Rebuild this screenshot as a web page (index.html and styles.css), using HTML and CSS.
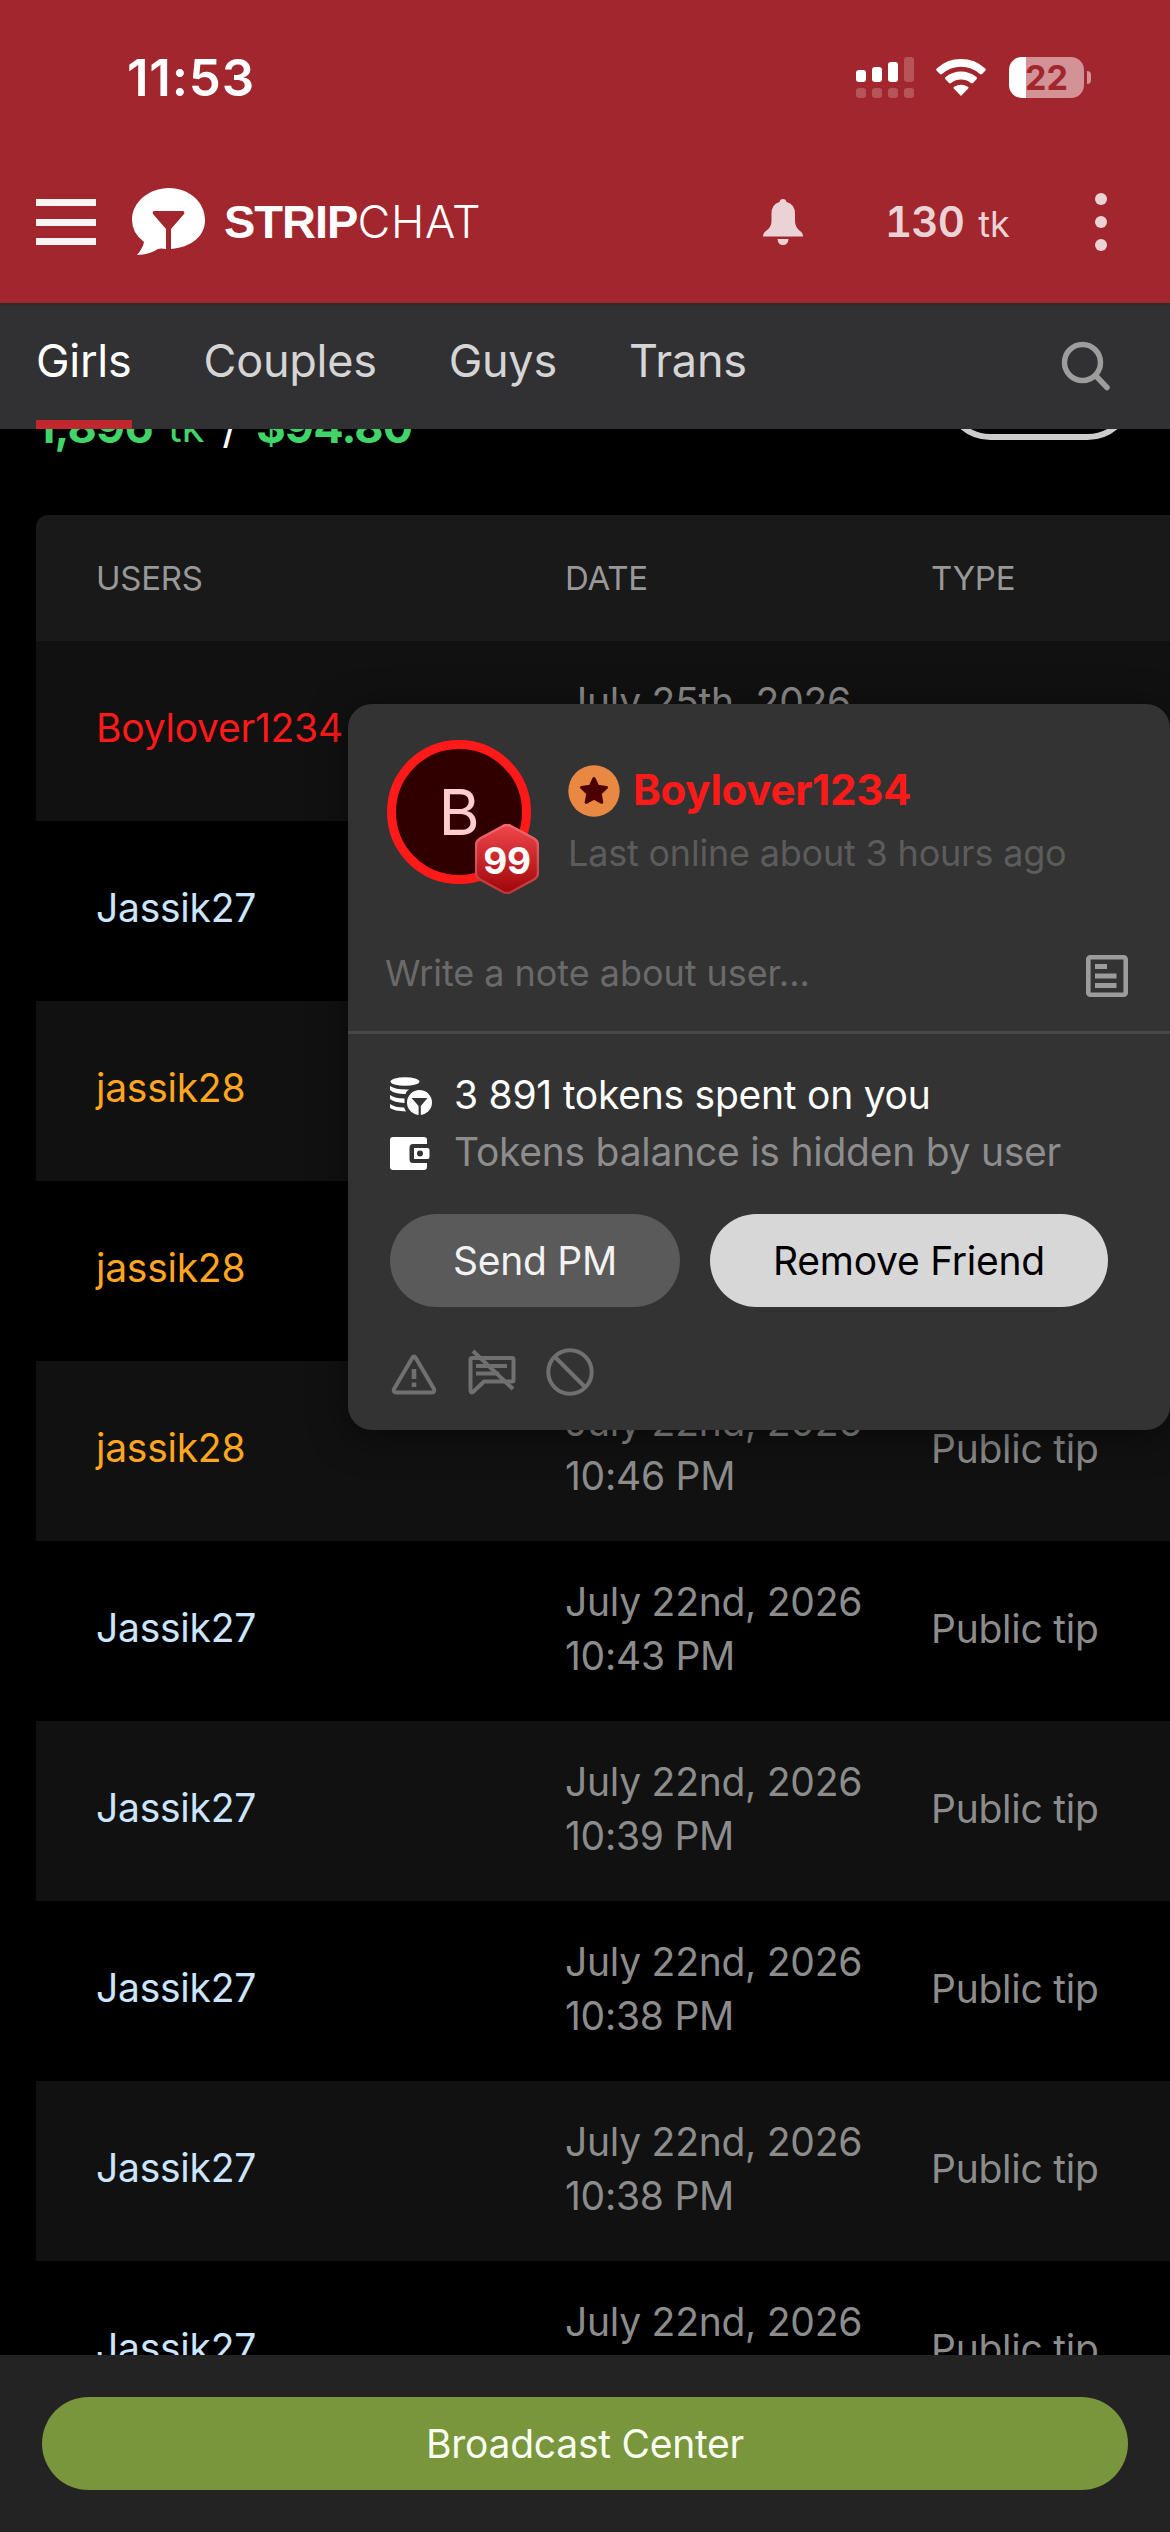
FILE: index.html
```html
<!DOCTYPE html>
<html lang="en">
<head>
<meta charset="utf-8">
<title>Stripchat</title>
<link rel="stylesheet" href="styles.css">
</head>
<body>
<div class="status-bar">
  <div class="time">11:53</div>
  <div class="status-icons">
    <svg class="signal" width="58" height="41" viewBox="0 0 58 41" fill="#fff">
      <rect x="0" y="13" width="10" height="12" rx="3"/><rect x="16" y="10" width="10" height="15" rx="3"/><rect x="32" y="5" width="10" height="20" rx="3"/>
      <g fill="#b55459"><rect x="48" y="0" width="10" height="25" rx="3"/><rect x="0" y="31" width="10" height="10" rx="3"/><rect x="16" y="31" width="10" height="10" rx="3"/><rect x="32" y="31" width="10" height="10" rx="3"/><rect x="48" y="31" width="10" height="10" rx="3"/></g>
    </svg>
    <svg class="wifi" width="50" height="37" viewBox="0 0 50 37" fill="#fff">
      <path d="M25 37 L17.8 29.6 Q17 28.6 18.2 27.8 Q25 23.6 31.800 27.800 Q33 28.600 32.200 29.600Z"/>
      <path d="M9.300 20 Q8.500 19 9.600 18 Q16.500 12.500 25 12.500 Q33.500 12.500 40.400 18 Q41.500 19 40.700 20 L37 24 Q36 24.800 35 24 Q30.500 20.600 25 20.600 Q19.500 20.600 15 24 Q14 24.800 13 24Z"/>
      <path d="M.5 11.400 Q-.3 10.400 .8 9.400 Q11 0 25 0 Q39 0 49.200 9.400 Q50.300 10.400 49.500 11.400 L46 15 Q45 15.800 44 15 Q35.500 7.800 25 7.800 Q14.500 7.800 6 15 Q5 15.800 4 15Z"/>
    </svg>
    <div class="battery"><span class="battery-level">22</span></div>
  </div>
</div>
<header class="header">
  <div class="burger"><i></i><i></i><i></i></div>
  <svg class="logo-mark" width="74" height="68" viewBox="0 0 74 68">
    <path fill="#fff" d="M37 0C57 0 73 14 73 32C73 48 60 59 39 61L39 41L52 26Q53 23.500 51 23L22 23Q20 23.500 21 26L34 41L34 61Q29 60 26 61Q18 66.500 5 67Q11 60 12 54Q0 45 0 32C0 14 17 0 37 0Z"/>
  </svg>
  <div class="logo-text"><b>STRIP</b><span>CHAT</span></div>
  <svg class="bell" width="40" height="46" viewBox="0 0 40 46" fill="#ebd3d5">
    <path d="M20 0Q23 0 23.500 3Q32 5 32 15V22Q32 28 37 32Q40 34 40 37.500H0Q0 34 3 32Q8.500 28 8.500 22V15Q8.500 5 16.500 3Q17 0 20 0Z"/><path d="M14.500 40H25.500Q25 46 20 46Q15 46 14.500 40Z"/>
  </svg>
  <div class="balance"><b>130</b><span>tk</span></div>
  <div class="more"><i></i><i></i><i></i></div>
</header>
<nav class="nav">
  <a class="tab tab-girls active">Girls</a><a class="tab tab-couples">Couples</a><a class="tab tab-guys">Guys</a><a class="tab tab-trans">Trans</a>
  <svg class="search" width="50" height="50" viewBox="0 0 50 50" fill="none" stroke="#9d9d9e" stroke-width="5.500" stroke-linecap="round"><circle cx="21.500" cy="21.500" r="18"/><path d="M35 35L46 46.500"/></svg>
</nav>
<main class="content">
  <div class="earnings">
    <div class="sum"><b>1,896</b><span class="unit">tk</span><span class="slash">/</span><b>$94.80</b></div>
    <div class="outline-btn"></div>
  </div>
  <div class="table">
    <div class="row head"><div>USERS</div><div>DATE</div><div>TYPE</div></div>
    <div class="row"><div class="user red">Boylover1234</div><div class="date">July 25th, 2026</div><div></div></div>
    <div class="row"><div class="user blue">Jassik27</div><div></div><div></div></div>
    <div class="row"><div class="user gold">jassik28</div><div></div><div></div></div>
    <div class="row"><div class="user gold">jassik28</div><div></div><div></div></div>
    <div class="row"><div class="user gold">jassik28</div><div class="date">July 22nd, 2026<br>10:46 PM</div><div class="type">Public tip</div></div>
    <div class="row"><div class="user blue">Jassik27</div><div class="date">July 22nd, 2026<br>10:43 PM</div><div class="type">Public tip</div></div>
    <div class="row"><div class="user blue">Jassik27</div><div class="date">July 22nd, 2026<br>10:39 PM</div><div class="type">Public tip</div></div>
    <div class="row"><div class="user blue">Jassik27</div><div class="date">July 22nd, 2026<br>10:38 PM</div><div class="type">Public tip</div></div>
    <div class="row"><div class="user blue">Jassik27</div><div class="date">July 22nd, 2026<br>10:38 PM</div><div class="type">Public tip</div></div>
    <div class="row"><div class="user blue">Jassik27</div><div class="date">July 22nd, 2026</div><div class="type">Public tip</div></div>
  </div>
</main>
<footer class="footer"><div class="broadcast">Broadcast Center</div></footer>

<section class="popup">
  <div class="profile">
    <div class="avatar">B
      <div class="level">
        <svg width="64" height="70" viewBox="0 0 64 70">
          <defs><linearGradient id="lv" x1="0" y1="0" x2="0" y2="1"><stop offset="0" stop-color="#f0474c"/><stop offset="1" stop-color="#a00509"/></linearGradient>
          <linearGradient id="le" x1="0" y1="0" x2="0" y2="1"><stop offset="0" stop-color="#f4686c"/><stop offset="1" stop-color="#b8383b"/></linearGradient></defs>
          <path d="M28 2Q32 0 36 2L59 14.500Q63 17 63 21V49Q63 53 59 55.500L36 68Q32 70 28 68L5 55.500Q1 53 1 49V21Q1 17 5 14.500Z" fill="url(#lv)" stroke="url(#le)" stroke-width="2.500"/>
        </svg>
        <span>99</span>
      </div>
    </div>
    <div class="identity">
      <div class="name-line">
        <svg width="52" height="52" viewBox="0 0 52 52"><circle cx="26" cy="26" r="25.700" fill="#e88843"/><path fill="#4d0000" stroke="#4d0000" stroke-width="3" stroke-linejoin="round" d="M26 13.500L29.800 21.300L38.500 22.500L32.200 28.500L33.800 37.300L26 33.200L18.200 37.300L19.800 28.500L13.500 22.500L22.200 21.300Z"/></svg>
        <b>Boylover1234</b>
      </div>
      <div class="last-seen">Last online about 3 hours ago</div>
    </div>
  </div>
  <div class="note">
    <span>Write a note about user...</span>
    <svg width="42" height="42" viewBox="0 0 42 42" fill="#9c9c9c"><rect x="2.300" y="2.300" width="37.400" height="37.400" rx="2" fill="none" stroke="#9c9c9c" stroke-width="4.600"/><rect x="9" y="9" width="12" height="5"/><rect x="9" y="18.500" width="21.500" height="5"/><rect x="9" y="28" width="21.500" height="5"/></svg>
  </div>
  <div class="tokens">
    <svg width="42" height="38" viewBox="0 0 42 38" fill="#fff"><ellipse cx="15" cy="4.500" rx="14.500" ry="4.300"/><path d="M0 9Q6 13 19 12.500Q16 14 15.500 17Q4 17 0 13Z"/><path d="M0 18Q5 21.500 14.500 21.500V26Q4 25.500 0 22Z"/><path d="M0 27Q5 30.500 14 30.500L16 34.500Q4 34 0 31Z"/><circle cx="29.500" cy="25.500" r="12.500"/><path fill="#333" d="M21.500 21H37.500L30.800 29V38H28.600V29Z"/></svg>
    <span>3 891 tokens spent on you</span>
  </div>
  <div class="tokens muted">
    <svg width="42" height="33" viewBox="0 0 42 33"><path fill="#fff" d="M3 0H34Q37 0 37 3V7H23Q19.500 7 19.500 10.500V22.500Q19.500 26 23 26H37V30Q37 33 34 33H3Q0 33 0 30V3Q0 0 3 0Z"/><path fill="#fff" fill-rule="evenodd" d="M24 11H37.500Q39.500 11 39.500 13V20Q39.500 22 37.500 22H24ZM30 13.500A3 3 0 1 0 30 19.500A3 3 0 1 0 30 13.500Z"/></svg>
    <span>Tokens balance is hidden by user</span>
  </div>
  <div class="actions"><div class="btn send">Send PM</div><div class="btn remove">Remove Friend</div></div>
  <div class="tools">
    <svg width="48" height="48" viewBox="0 0 48 48" fill="none" stroke="#707070" stroke-width="4" stroke-linejoin="round"><path d="M22.500 9.500Q24 7.500 25.500 9.500L44 41Q45 44.500 42 44.500H6Q3 44.500 4 41Z"/><path d="M24 21V31M24 34.500V39" stroke-width="4.600"/></svg>
    <svg width="48" height="48" viewBox="0 0 48 48" fill="none" stroke="#707070" stroke-width="4" stroke-linejoin="round"><path d="M4 10H44Q45.500 10 45.500 11.500V32Q45.500 33.500 44 33.500H16L5 44Q2.500 45.500 2.500 42V11.500Q2.500 10 4 10Z"/><path d="M8 18H39M8 25.500H31"/><path d="M5 3L45 41"/></svg>
    <svg width="48" height="48" viewBox="0 0 48 48" fill="none" stroke="#707070" stroke-width="4"><circle cx="24" cy="24" r="21.700"/><path d="M9 9L39 39"/></svg>
  </div>
</section>
</body>
</html>
```
FILE: styles.css
```css
* { box-sizing: border-box; }
body {
  margin: 0; width: 1170px; height: 2532px; overflow: hidden; position: relative;
  display: flex; flex-direction: column; background: #000; color: #fff;
  font-family: Inter, "Liberation Sans", sans-serif; font-size: 39px;
  font-optical-sizing: none; font-variation-settings: "opsz" 14;
  letter-spacing: -.25px; white-space: nowrap;
}
svg { display: block; flex: none; }

/* status bar */
.status-bar { height: 141px; background: #a1262d; display: flex; justify-content: space-between; padding: 57px 86px 0 127px; }
.time { font-size: 51px; font-weight: 600; line-height: 42px; letter-spacing: .8px; }
.status-icons { display: flex; align-items: flex-start; }
.wifi { margin: 2px 23px 0 22.5px; }
.battery {
  position: relative; width: 75px; height: 41px; border-radius: 13px;
  background: linear-gradient(90deg, #fff 17px, #d29296 17px);
  font-size: 34px; font-weight: 700; line-height: 42px; color: #a1262d; text-align: center; letter-spacing: 0;
}
.battery::after { content: ""; position: absolute; left: 78px; top: 14px; width: 4px; height: 13px; background: #d29296; border-radius: 0 4px 4px 0; }

/* site header */
.header { height: 162px; background: #a1262d; display: flex; align-items: flex-start; padding: 0 63px 0 36px; }
.burger { width: 60px; display: flex; flex-direction: column; gap: 12.5px; margin-top: 58px; }
.burger i { height: 7px; background: #faf3f3; }
.logo-mark { margin: 47px 0 0 36px; }
.logo-text { margin: 53px 0 0 18px; width: 260px; font: 47px/56px "Liberation Sans", Arial, sans-serif; }
.logo-text b { letter-spacing: -1px; }
.logo-text span { font-family: Inter, sans-serif; font-weight: 300; font-size: 45px; letter-spacing: .7px; }
.bell { margin: 58px 0 0 279px; }
.balance { margin: 54px 0 0 82px; width: 124px; line-height: 54px; color: #ebd3d5; display: flex; gap: 14px; }
.balance b { font-size: 42px; font-weight: 600; font-variant-numeric: tabular-nums; letter-spacing: -.8px; }
.balance span { font-size: 36px; padding-top: 2px; letter-spacing: 0; }
.more { margin: 52px 0 0 auto; display: flex; flex-direction: column; gap: 11px; }
.more i { width: 12px; height: 12px; border-radius: 50%; background: #ebd3d5; }

/* category tabs */
.nav { height: 126px; background: #313133; border-top: 3px solid #332a2c; display: flex; padding: 0 59px 0 36px; gap: 72px; flex: none; }
.tab { font-size: 45px; line-height: 54px; padding-top: 28px; height: 123px; color: #d5d5d6; letter-spacing: -.25px; }
.tab.active { color: #fff; border-bottom: 9px solid #c1272f; }
.search { margin: 35px 0 0 auto; }

/* earnings list */
.content { flex: 1; min-height: 0; overflow: hidden; }
.earnings { height: 86px; display: flex; justify-content: space-between; padding: 0 36px; }
.sum { color: #41d468; font-size: 45px; line-height: 54px; height: 54px; margin-top: -29px; display: flex; }
.sum b { letter-spacing: -.8px; }
.unit { font-size: 42px; margin-left: 15px; }
.slash { color: #fff; margin: 0 18px 0 18px; }
.outline-btn { width: 190px; height: 93px; margin-top: -82px; border: 6px solid #ccc; border-radius: 47px; }
.table { margin-left: 36px; border-radius: 12px 0 0 0; overflow: hidden; }
.row { height: 180px; display: grid; grid-template-columns: 469px 366px 1fr; padding: 0 0 6px 60px; align-items: center; }
.row:nth-child(even) { background: #111; }
.head { height: 126px; background: #191919; color: #989898; font-size: 33px; padding-bottom: 0; }
.date, .type { color: #8c8c8c; line-height: 54px; }
.date { align-self: start; padding-top: 34px; }
.type { padding-top: 2px; }
.user { padding-bottom: 2px; }
.red { color: #ff1a1a; }
.blue { color: #cce6ff; }
.gold { color: #ffa61f; }

/* bottom bar */
.footer { height: 177px; background: #232323; padding: 42px 42px 0; flex: none; }
.broadcast { height: 93px; line-height: 93px; border-radius: 47px; background: #79963d; color: #f8fff0; text-align: center; }

/* user popup */
.popup { position: absolute; left: 348px; top: 704px; width: 822px; height: 726px; background: #333; border-radius: 24px; box-shadow: 0 6px 36px rgba(0,0,0,.5); }
.profile { display: flex; height: 216px; padding: 36px 0 0 39px; }
.avatar { position: relative; width: 144px; height: 144px; border-radius: 50%; border: 9px solid #ff1a1a; background: #300000; color: #ffcdcd; font-size: 63px; line-height: 126px; text-align: center; }
.level { position: absolute; left: 79px; top: 75px; width: 64px; height: 70px; }
.level span { position: absolute; inset: 0; font-size: 37px; font-weight: 700; line-height: 73px; color: #fff; }
.identity { margin: 25px 0 0 37px; }
.name-line { display: flex; align-items: center; gap: 13px; height: 52px; color: #ff1a1a; font-size: 42px; }
.name-line b { margin-top: -3px; }
.last-seen { font-size: 36px; line-height: 54px; color: #5c5c5c; margin-top: 9px; letter-spacing: -.2px; }
.note { height: 114px; border-bottom: 3px solid #484848; display: flex; justify-content: space-between; padding: 31px 42px 0 37px; font-size: 36px; line-height: 44px; color: #6a6a6a; letter-spacing: -.05px; }
.note svg { margin-top: 4px; }
.tokens { display: flex; gap: 22px; height: 57px; align-items: center; padding-left: 42px; margin-top: 32px; }
.tokens svg { margin-top: 3px; }
.tokens.muted { margin-top: 0; color: #8d8d8d; }
.actions { display: flex; gap: 30px; margin: 34px 0 0 42px; }
.btn { height: 93px; line-height: 93px; border-radius: 47px; text-align: center; }
.send { width: 290px; background: #5a5a5a; color: #f2f2f2; }
.remove { width: 398px; background: #d7d7d7; color: #000; }
.tools { display: flex; gap: 30px; margin: 41px 0 0 42px; }
```
